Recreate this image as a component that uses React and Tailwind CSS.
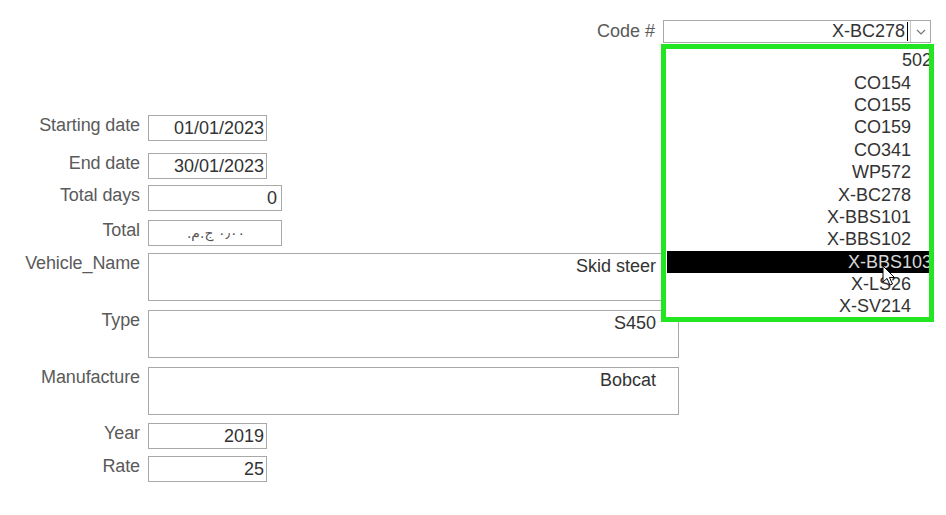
import React from "react";

const font = { fontFamily: '"Liberation Sans", Arial, sans-serif' };

function Row({ label, mt, children }) {
  return (
    <div className={`flex items-start ${mt}`}>
      <div className="w-[140px] shrink-0 text-right text-[18px] leading-[21px] text-[#5a5a5a] tracking-[-0.1px]">
        {label}
      </div>
      <div className="ml-[8px]">{children}</div>
    </div>
  );
}

function Box({ w, h = "h-[26px]", children, extra = "" }) {
  return (
    <div
      className={`${w} ${h} border border-[#a8a8a8] bg-white text-right text-[18px] leading-[24px] text-[#333] pr-[2px] overflow-hidden ${extra}`}
    >
      {children}
    </div>
  );
}

const items = [
  { t: "502", clip: true },
  { t: "CO154" },
  { t: "CO155" },
  { t: "CO159" },
  { t: "CO341" },
  { t: "WP572" },
  { t: "X-BC278" },
  { t: "X-BBS101" },
  { t: "X-BBS102" },
  { t: "X-BBS103", sel: true, clip: true },
  { t: "X-LS26" },
  { t: "X-SV214" },
];

export default function App() {
  return (
    <div className="relative w-[946px] h-[515px] bg-white overflow-hidden" style={font}>
      {/* Code row */}
      <div className="flex justify-end items-start pt-[20px] pr-[15px]">
        <div className="text-[18px] leading-[22px] text-[#5a5a5a] mr-[8px]">Code #</div>
        <div className="w-[268px] h-[23px] border border-[#a8a8a8] flex items-stretch">
          <div className="flex-1 text-right text-[18px] leading-[21px] text-[#333] pr-[2px]">X-BC278</div>
          <div className="w-[1px] bg-black my-[1px]" />
          <div className="w-[20px] border-l border-[#c4c4c4] ml-[2px] flex items-center justify-center">
            <svg width="10" height="6" viewBox="0 0 10 6">
              <path d="M1 1 L5 5 L9 1" fill="none" stroke="#777" strokeWidth="1.2" />
            </svg>
          </div>
        </div>
      </div>

      {/* Form */}
      <div className="mt-[72px] flex flex-col">
        <Row label="Starting date" mt="mt-0">
          <Box w="w-[119px]">01/01/2023</Box>
        </Row>
        <Row label="End date" mt="mt-[12px]">
          <Box w="w-[119px]">30/01/2023</Box>
        </Row>
        <Row label="Total days" mt="mt-[6px]">
          <Box w="w-[134px]" extra="pr-[4px]">0</Box>
        </Row>
        <Row label="Total" mt="mt-[9px]">
          <Box w="w-[134px]" extra="!text-center !leading-[22px]">
            <span
              dir="rtl"
              className="text-[14px] text-[#555] pl-[4px]"
              style={{ fontFamily: '"DejaVu Sans", sans-serif' }}
            >
              ٠٫٠٠ ج.م.‏
            </span>
          </Box>
        </Row>
        <Row label="Vehicle_Name" mt="mt-[7px]">
          <Box w="w-[531px]" h="h-[48px]" extra="pr-[22px]">Skid steer</Box>
        </Row>
        <Row label="Type" mt="mt-[9px]">
          <Box w="w-[531px]" h="h-[48px]" extra="pr-[22px]">S450</Box>
        </Row>
        <Row label="Manufacture" mt="mt-[9px]">
          <Box w="w-[531px]" h="h-[48px]" extra="pr-[22px]">Bobcat</Box>
        </Row>
        <Row label="Year" mt="mt-[8px]">
          <Box w="w-[119px]">2019</Box>
        </Row>
        <Row label="Rate" mt="mt-[7px]">
          <Box w="w-[119px]">25</Box>
        </Row>
      </div>

      {/* Dropdown list overlay */}
      <div className="absolute left-[661px] top-[44px] w-[273px] h-[278px] border-[5px] border-[#22e622] bg-white overflow-hidden">
        {items.map((it) => (
          <div
            key={it.t}
            className={`h-[22.4px] flex justify-end items-center text-[18px] leading-[22px] ${
              it.clip ? "pr-0" : "pr-[18px]"
            } ${it.sel ? "bg-black text-[#d8d8d8] ml-[1px]" : "text-[#333]"}`}
          >
            <span className={`whitespace-nowrap ${it.clip ? "mr-[-3px]" : ""}`}>{it.t}</span>
          </div>
        ))}
      </div>

      {/* Mouse cursor */}
      <svg className="absolute left-[882px] top-[265px]" width="14" height="22" viewBox="0 0 14 22">
        <path
          d="M1 1 L1 17 L5 13.5 L8 20 L10.5 19 L7.5 12.5 L12.5 12.5 Z"
          fill="white"
          stroke="black"
          strokeWidth="1"
          strokeLinejoin="round"
        />
      </svg>
    </div>
  );
}
